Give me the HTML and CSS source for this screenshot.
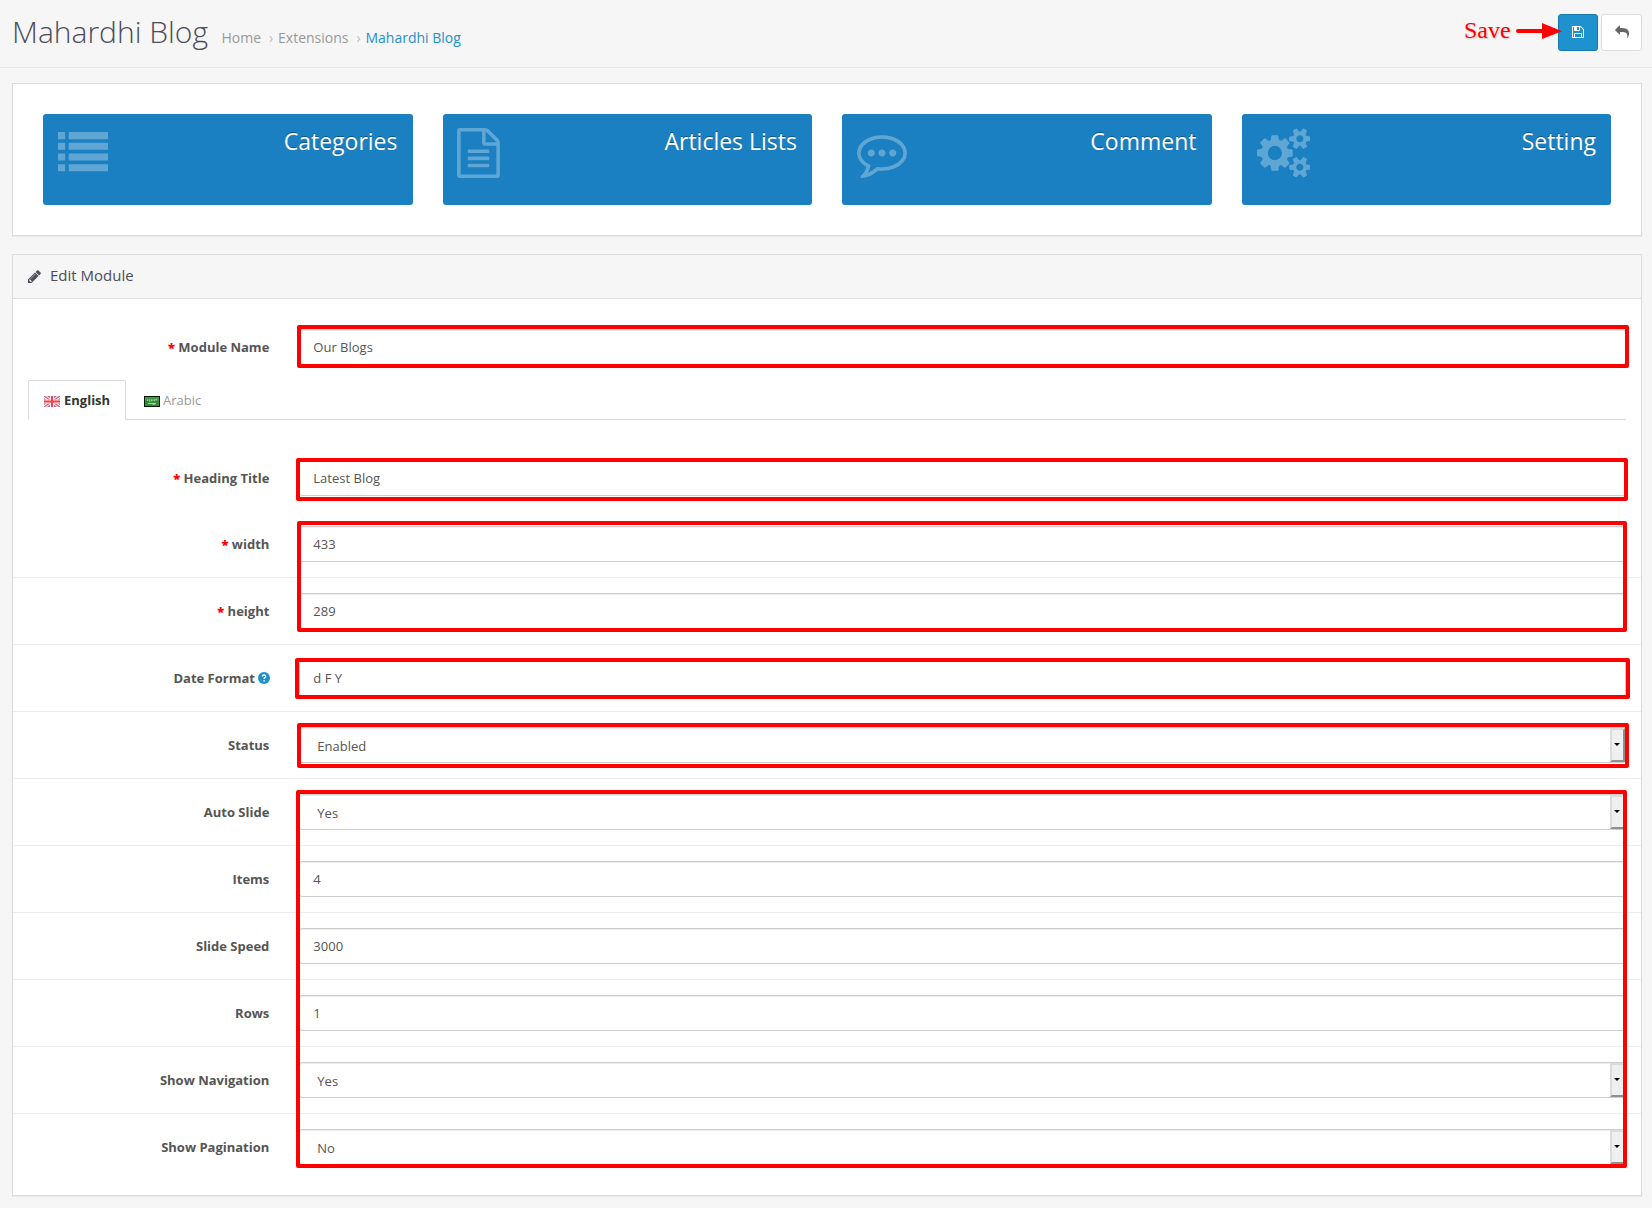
FILE: index.html
```html
<!DOCTYPE html>
<html lang="en">
<head>
<meta charset="utf-8">
<title>Mahardhi Blog</title>
<link rel="stylesheet" href="styles.css">
</head>
<body>
<header class="page-header">
  <h1>Mahardhi Blog</h1>
  <nav class="breadcrumb"><a>Home</a><i>›</i><a>Extensions</a><i>›</i><a class="current">Mahardhi Blog</a></nav>
  <div class="actions">
    <a class="btn btn-primary"><svg viewBox="0 0 1792 1792"><path d="M512 1536h768v-384h-768v384zm896 0h128v-896q0-14-10-38.500t-20-34.500l-281-281q-10-10-34-20t-39-10v416q0 40-28 68t-68 28h-576q-40 0-68-28t-28-68v-416h-128v1280h128v-416q0-40 28-68t68-28h832q40 0 68 28t28 68v416zm-384-928v-320q0-13-9.500-22.500t-22.500-9.500h-192q-13 0-22.500 9.500t-9.500 22.500v320q0 13 9.500 22.500t22.500 9.500h192q13 0 22.500-9.500t9.500-22.500zm640 32v928q0 40-28 68t-68 28h-1344q-40 0-68-28t-28-68v-1344q0-40 28-68t68-28h928q40 0 88 20t76 48l280 280q28 28 48 76t20 88z"/></svg></a>
    <a class="btn btn-default"><svg class="reply" viewBox="0 0 1792 1792"><path d="M1792 640q0 26-19 45l-512 512q-19 19-45 19t-45-19-19-45v-256h-224q-98 0-175.500 6t-154 21.500-133 42.500-105.500 69.500-80 101-48.500 138.500-17.500 181q0 55 5 123 0 6 2.500 23.500t2.500 26.500q0 15-8.500 25t-23.500 10q-16 0-28-17-7-9-13-22t-13.500-30-10.500-24q-127-285-127-451 0-199 53-333 162-403 875-403h224v-256q0-26 19-45t45-19 45 19l512 512q19 19 19 45z"/></svg></a>
  </div>
</header>

<section class="panel tiles">
  <a class="tile"><svg class="w50" viewBox="0 0 1792 1792"><path d="M0 143h256v256H0zM384 143h1408v256H384zM0 527h256v256H0zM384 527h1408v256H384zM0 911h256v256H0zM384 911h1408v256H384zM0 1295h256v256H0zM384 1295h1408v256H384z"/></svg><span>Categories</span></a>
  <a class="tile"><svg class="w43" viewBox="128 0 1536 1792"><path d="M1596 380q28 28 48 76t20 88v1152q0 40-28 68t-68 28h-1344q-40 0-68-28t-28-68v-1600q0-40 28-68t68-28h896q40 0 88 20t76 48zm-444-244v376h376q-10-29-22-41l-313-313q-12-12-41-22zm384 1528v-1024h-416q-40 0-68-28t-28-68v-416h-768v1536h1280zm-1024-864q0-14 9-23t23-9h704q14 0 23 9t9 23v64q0 14-9 23t-23 9h-704q-14 0-23-9t-9-23v-64zm736 224q14 0 23 9t9 23v64q0 14-9 23t-23 9h-704q-14 0-23-9t-9-23v-64q0-14 9-23t23-9h704zm0 256q14 0 23 9t9 23v64q0 14-9 23t-23 9h-704q-14 0-23-9t-9-23v-64q0-14 9-23t23-9h704z"/></svg><span>Articles Lists</span></a>
  <a class="tile"><svg class="w50" viewBox="0 0 1792 1792"><path d="M640 896q0 53-37.500 90.500t-90.500 37.500-90.500-37.500-37.500-90.500 37.500-90.500 90.500-37.500 90.500 37.500 37.500 90.500zm384 0q0 53-37.500 90.500t-90.500 37.500-90.500-37.500-37.500-90.500 37.500-90.500 90.500-37.500 90.500 37.500 37.500 90.500zm384 0q0 53-37.500 90.500t-90.500 37.500-90.500-37.500-37.500-90.500 37.500-90.500 90.500-37.500 90.500 37.500 37.500 90.500zm-512-512q-204 0-381.500 69.500t-282 187.500-104.500 255q0 112 71.500 213.500t201.500 175.500l87 50-27 96q-24 91-70 172 152-63 275-171l43-38 57 6q69 8 130 8 204 0 381.500-69.500t282-187.500 104.500-255-104.500-255-282-187.500-381.500-69.500zm896 512q0 174-120 321.500t-326 233-450 85.500q-70 0-145-8-198 175-460 242-49 14-114 22h-5q-15 0-27-10.500t-16-27.500v-1q-3-4-.5-12t2-10 4.500-9.500l6-9 7-8.500 8-9q7-8 31-34.500t34.500-38 31-39.500 32.500-51 27-59 26-76q-157-89-247.500-220t-90.500-281q0-130 71-248.500t191-204.500 286-136.500 348-50.500 348 50.500 286 136.500 191 204.500 71 248.500z"/></svg><span>Comment</span></a>
  <a class="tile"><svg class="w54" viewBox="0 0 1920 1792"><path d="M896 896q0-106-75-181t-181-75-181 75-75 181 75 181 181 75 181-75 75-181zm768 512q0-52-38-90t-90-38-90 38-38 90q0 53 37.500 90.500t90.500 37.500 90.500-37.500 37.500-90.500zm0-1024q0-52-38-90t-90-38-90 38-38 90q0 53 37.500 90.500t90.500 37.500 90.500-37.500 37.500-90.500zm-384 421v185q0 10-7 19.500t-16 10.500l-155 24q-11 35-32 76 34 48 90 115 7 10 7 20 0 12-7 19-23 30-82.500 89.500t-78.500 59.500q-11 0-21-7l-115-90q-37 19-77 31-11 108-23 155-7 24-30 24h-186q-11 0-20-7.500t-10-17.500l-23-153q-34-10-75-31l-118 89q-7 7-20 7-11 0-21-8-144-133-144-160 0-9 7-19 10-14 41-53t47-61q-23-44-35-82l-152-24q-10-1-17-9.500t-7-19.500v-185q0-10 7-19.500t16-10.500l155-24q11-35 32-76-34-48-90-115-7-11-7-20 0-12 7-20 22-30 82-89t79-59q11 0 21 7l115 90q34-18 77-32 11-108 23-154 7-24 30-24h186q11 0 20 7.500t10 17.500l23 153q34 10 75 31l118-89q8-7 20-7 11 0 21 8 144 133 144 160 0 9-7 19-12 16-42 54t-45 60q23 48 34 82l152 23q10 2 17 10.500t7 19.500zm640 533v140q0 16-149 31-12 27-30 52 51 113 51 138 0 4-4 7-122 71-124 71-8 0-46-47t-52-68q-20 2-30 2t-30-2q-14 21-52 68t-46 47q-2 0-124-71-4-3-4-7 0-25 51-138-18-25-30-52-149-15-149-31v-140q0-16 149-31 13-29 30-52-51-113-51-138 0-4 4-7 4-2 35-20t59-34 30-16q8 0 46 46.500t52 67.500q20-2 30-2t30 2q51-71 92-112l6-2q4 0 124 70 4 3 4 7 0 25-51 138 17 23 30 52 149 15 149 31zm0-1024v140q0 16-149 31-12 27-30 52 51 113 51 138 0 4-4 7-122 71-124 71-8 0-46-47t-52-68q-20 2-30 2t-30-2q-14 21-52 68t-46 47q-2 0-124-71-4-3-4-7 0-25 51-138-18-25-30-52-149-15-149-31v-140q0-16 149-31 13-29 30-52-51-113-51-138 0-4 4-7 4-2 35-20t59-34 30-16q8 0 46 46.500t52 67.500q20-2 30-2t30 2q51-71 92-112l6-2q4 0 124 70 4 3 4 7 0 25-51 138 17 23 30 52 149 15 149 31z"/></svg><span>Setting</span></a>
</section>

<section class="panel editor">
  <div class="panel-heading">
    <svg viewBox="128 128 1536 1536"><path d="M491 1536l91-91-235-235-91 91v107h128v128h107zm523-928q0-22-22-22-10 0-17 7l-542 542q-7 7-7 17 0 22 22 22 10 0 17-7l542-542q7-7 7-17zm-54-192l416 416-832 832h-416v-416zm683 96q0 53-37 90l-166 166-416-416 166-165q36-38 90-38 53 0 91 38l235 234q37 39 37 91z"/></svg>
    <h3>Edit Module</h3>
  </div>
  <div class="panel-body">
    <div class="row"><label><b>*</b> Module Name</label><div class="control">Our Blogs</div></div>
    <ul class="tabs">
      <li class="active"><svg class="flag" viewBox="0 0 16 11"><rect width="16" height="11" fill="#6f74bd"/><path d="M0 0l16 11M16 0L0 11" stroke="#fff" stroke-width="3.200"/><path d="M0 0l16 11M16 0L0 11" stroke="#f0505a" stroke-width="1.300"/><path d="M8 0v11M0 5.500h16" stroke="#fbe9ec" stroke-width="4"/><path d="M8 0v11M0 5.500h16" stroke="#f4404a" stroke-width="2"/></svg>English</li>
      <li><svg class="flag" viewBox="0 0 16 11"><rect width="16" height="11" fill="#041a04"/><rect x="1" y="1" width="14" height="9" fill="#338a36"/><rect x="1" y="1" width="14" height="4" fill="#58a45a" opacity=".5"/><path d="M3.500 3.300v1.700M5 5.200h1.500M5.500 3.300v1.500M7.500 3.300v2M9 3.500v1.500M10.500 3.300v2M12.300 3.300v1M11.500 3.300h1.500" stroke="#b4d8b4" stroke-width=".8"/><path d="M4 7.500h8M8.500 8.200h2.500" stroke="#c8e4c8" stroke-width=".8"/></svg>Arabic</li>
    </ul>
    <div class="row"><label><b>*</b> Heading Title</label><div class="control">Latest Blog</div></div>
    <div class="row"><label><b>*</b> width</label><div class="control">433</div></div>
    <div class="row ruled"><label><b>*</b> height</label><div class="control">289</div></div>
    <div class="row ruled"><label>Date Format <svg class="help" viewBox="0 0 12 12"><circle cx="6" cy="6" r="6"/><path d="M4.300 4.500Q4.500 3 6.100 3T7.700 4.500Q7.700 5.300 6.900 5.700T6.100 6.900M6.100 8v1.400"/></svg></label><div class="control">d F Y</div></div>
    <div class="row ruled"><label>Status</label><div class="control select">Enabled<i></i></div></div>
    <div class="row ruled"><label>Auto Slide</label><div class="control select">Yes<i></i></div></div>
    <div class="row ruled"><label>Items</label><div class="control">4</div></div>
    <div class="row ruled"><label>Slide Speed</label><div class="control">3000</div></div>
    <div class="row ruled"><label>Rows</label><div class="control">1</div></div>
    <div class="row ruled"><label>Show Navigation</label><div class="control select">Yes<i></i></div></div>
    <div class="row ruled"><label>Show Pagination</label><div class="control select">No<i></i></div></div>
  </div>
</section>

<div class="note-save">Save</div>
<svg class="note-arrow" viewBox="0 0 46 18"><path d="M2 9h25" stroke="#f00" stroke-width="4" stroke-linecap="round"/><path d="M26 1l20 8.300L26 17z" fill="#f00"/></svg>
<div class="mark mark-name"></div>
<div class="mark mark-title"></div>
<div class="mark mark-size"></div>
<div class="mark mark-date"></div>
<div class="mark mark-status"></div>
<div class="mark mark-slider"></div>
</body>
</html>
```
FILE: styles.css
```css
* { box-sizing: border-box; }
body {
  position: relative;
  margin: 0;
  height: 1208px;
  overflow: hidden;
  background: #f6f6f6;
  color: #555;
  font: 13px/20px "Open Sans", sans-serif;
}
svg { display: block; fill: currentColor; }

.page-header {
  display: flex;
  align-items: flex-start;
  height: 68px;
  padding: 14px 10px 0 12px;
  border-bottom: 1px solid #e7e7e7;
}
h1 { margin: 0; font-size: 30px; line-height: 36px; font-weight: 300; color: #4c4d5a; white-space: nowrap; }
.breadcrumb { display: flex; margin: 14px 0 0 13.500px; font-size: 14px; line-height: 20px; color: #999; }
.breadcrumb i { width: 17px; padding-left: 8px; font-style: normal; color: #bbb; }
.breadcrumb .current { color: #1e91cf; }
.actions { display: flex; gap: 3px; margin-left: auto; }
.btn { display: flex; align-items: center; justify-content: center; height: 37px; border: 1px solid; border-radius: 3px; }
.btn svg { width: 14px; height: 14px; margin-bottom: 1px; }
.btn-primary { width: 40px; background: #1e91cf; border-color: #1978ab; color: #fff; }
.btn-default { width: 41px; background: #fff; border-color: #ddd; color: #666; }
.reply { transform: scaleX(-1); }

.panel { margin: 0 10px 18px 12px; background: #fff; border: 1px solid #dcdcdc; box-shadow: 0 1px 1px rgba(0, 0, 0, .05); }
.tiles { display: grid; grid-template-columns: repeat(4, 1fr); gap: 30px; height: 153px; margin-top: 15px; padding: 30px 30px 0; }
.tile {
  display: flex;
  justify-content: space-between;
  height: 91px;
  padding: 13px 15px;
  border-radius: 3px;
  background: #1b80c2;
  color: #fff;
  font-size: 23px;
  line-height: 28px;
  font-weight: 450;
  text-shadow: 0 -1px 0 rgba(0, 0, 0, .35);
}
.tile svg { height: 50px; margin-top: 1px; opacity: .3; }
.w50 { width: 50px; }
.w43 { width: 43px; margin-left: -.5px; }
.w54 { width: 53.600px; }

.panel-heading { display: flex; align-items: center; gap: 9px; height: 44px; padding: 0 15px 2px; background: #f6f6f6; border-bottom: 1px solid #dcdcdc; color: #4c4d5a; }
.panel-heading svg { width: 13px; height: 13px; margin-top: 1px; }
h3 { margin: 0 0 1px; font-size: 15px; line-height: 20px; font-weight: 400; }
.panel-body { padding: 15px 15px; }
.row { display: flex; margin: 0 -15px; padding: 15px; }
.ruled { border-top: 1px solid #ededed; }
label { display: flex; justify-content: flex-end; align-items: center; width: 271.330px; height: 35px; margin-left: -15px; padding-right: 15px; font-weight: 700; white-space: pre; }
label b { color: #f00; }
.help { width: 12px; height: 12px; margin-right: -1px; color: #1e91cf; }
.help path { fill: none; stroke: #fff; stroke-width: 1.300; }
.control {
  display: flex;
  align-items: center;
  flex: 1;
  height: 36px;
  margin-left: 15px;
  padding: 0 13px 1px;
  border: 1px solid #ccc;
  border-radius: 3px;
  box-shadow: inset 0 1px 1px rgba(0, 0, 0, .075);
}
.select { padding: 1px 0 0 17px; }
.select i {
  display: flex;
  align-items: center;
  justify-content: center;
  width: 15px;
  height: 34px;
  margin: -1px 0 0 auto;
  background: #efefef;
  border: 2px solid;
  border-color: #dcdcdc #8f8f8f #8f8f8f #dcdcdc;
}
.select i::after { content: ""; margin: 0 1px 1px 0; border: 3px solid transparent; border-top-color: #000; border-bottom: 0; }

.tabs { display: flex; height: 40px; margin: 0 0 25px; padding: 0; list-style: none; border-bottom: 1px solid #dcdcdc; color: #999; }
.tabs li { display: flex; align-items: center; gap: 3px; height: 40px; padding: 0 16px 0 18px; }
.tabs .active { width: 98px; padding: 0 15px; border: 1px solid #dcdcdc; border-bottom-color: #fff; border-radius: 2px 2px 0 0; background: #fff; color: #333; font-weight: 700; gap: 4px; }
.flag { width: 16px; height: 11px; margin-top: 2px; flex: none; }

.note-save { position: absolute; left: 1464px; top: 16px; font: 24px/28px "Liberation Serif", serif; color: #f00; text-shadow: 1px 1px 2px rgba(0, 0, 0, .2); }
.note-arrow { position: absolute; left: 1516px; top: 22px; width: 46px; height: 18px; }
.mark { position: absolute; border: 4px solid #f00; border-radius: 2px; }
.mark-name { left: 297px; top: 325px; width: 1332px; height: 43px; }
.mark-title { left: 296px; top: 458px; width: 1332px; height: 43px; }
.mark-size { left: 297px; top: 521px; width: 1330px; height: 111px; }
.mark-date { left: 295px; top: 658px; width: 1335px; height: 41px; }
.mark-status { left: 297px; top: 723px; width: 1332px; height: 45px; }
.mark-slider { left: 296px; top: 790px; width: 1331px; height: 378px; }
```
